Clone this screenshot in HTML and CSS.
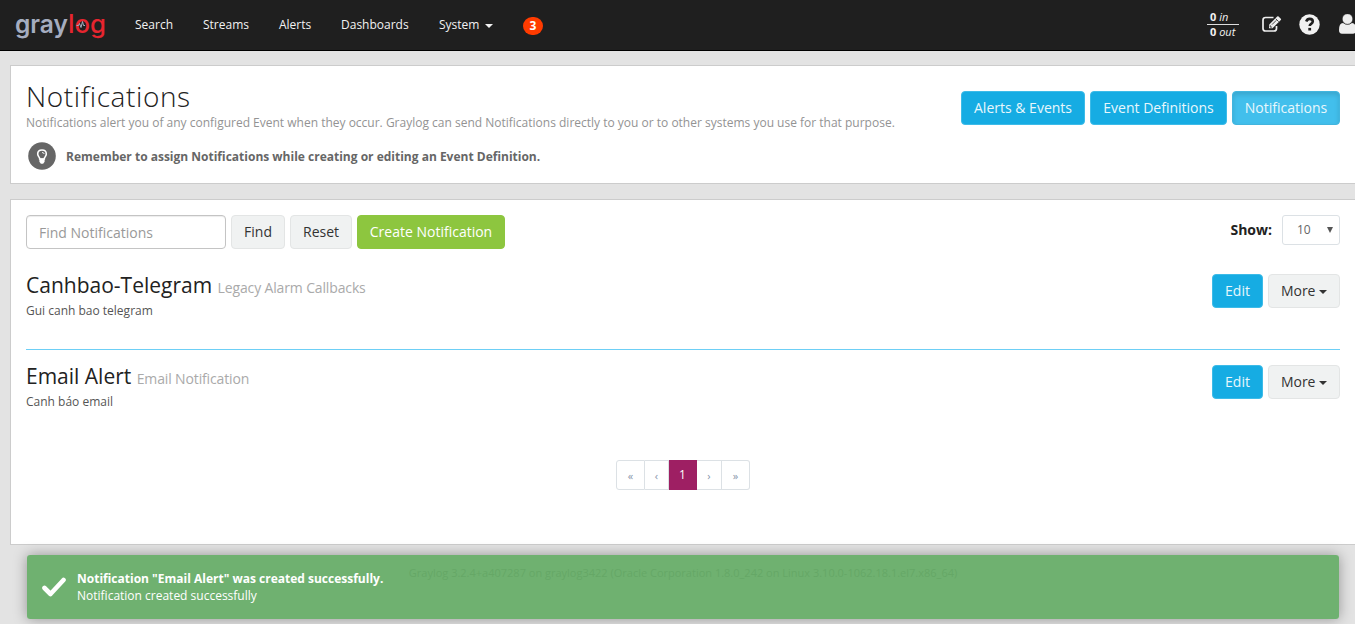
FILE: index.html
```html
<!DOCTYPE html>
<html lang="en">
<head>
<meta charset="utf-8">
<title>Graylog - Notifications</title>
<link rel="stylesheet" href="styles.css">
</head>
<body>
<nav class="navbar">
  <svg class="logo" width="92" height="32" viewBox="0 0 92 32" role="img" aria-label="graylog">
    <text class="logo-gray" x="0" y="25" textLength="53" lengthAdjust="spacingAndGlyphs">gray</text>
    <text class="logo-log" x="53" y="25" textLength="38" lengthAdjust="spacingAndGlyphs">log</text>
    <path d="M61.500 17.500h2l1-2 1.500 4 1.500-6 1 4h1.500" fill="none" stroke="#a5adc0" stroke-width="1"/>
  </svg>
  <ul class="menu">
    <li class="m-search">Search</li>
    <li class="m-streams">Streams</li>
    <li class="m-alerts">Alerts</li>
    <li class="m-dash">Dashboards</li>
    <li class="m-system">System <i class="caret"></i></li>
  </ul>
  <span class="badge">3</span>
  <div class="throughput"><div class="in"><b>0</b> <em>in</em></div><div><b>0</b> <em>out</em></div></div>
  <svg class="ic-edit" width="20" height="17" viewBox="0 0 20 17"><path d="M11.500 1.500H3.500Q1 1.500 1 4v8.500Q1 15 3.500 15h8.500q2.500 0 2.500-2.500V10" fill="none" stroke="#eee" stroke-width="1.700"/><path d="M7 12.200V8.800L15.200.6q.7-.6 1.400 0l2.200 2.100q.6.7 0 1.400l-8.300 8.100z" fill="#eee"/><path d="M8.200 9.200v1.900h1.900M13.700 2.700l3 3M10 8.600l4.300-4.300" fill="none" stroke="#1f1f1f" stroke-width=".8"/></svg>
  <svg class="ic-help" width="21" height="21" viewBox="0 0 21 21"><circle cx="10.500" cy="10.500" r="10.200" fill="#f1f1f1"/><path d="M7.200 7.500q1.100-2.700 3.500-2.600 3.100.1 3.100 2.700 0 1.300-1.600 2.300-1.500.9-1.500 2.200" fill="none" stroke="#1f1f1f" stroke-width="2.600"/><path d="M9.300 13.900h2.800v2.600H9.300z" fill="#1f1f1f"/></svg>
  <svg class="ic-user" width="16" height="20" viewBox="0 0 16 20"><path d="M0 16q0-6.800 4-7 4.500 3 9 0 4 .2 4 7 0 3.800-3 3.800H3Q0 19.800 0 16z" fill="#eee"/><circle cx="8.500" cy="5" r="5.300" fill="#eee" stroke="#1f1f1f" stroke-width=".6"/></svg>
</nav>

<main>
  <section class="panel head">
    <div>
      <h1>Notifications</h1>
      <p class="desc">Notifications alert you of any configured Event when they occur. Graylog can send Notifications directly to you or to other systems you use for that purpose.</p>
      <div class="hint">
        <svg width="28" height="28" viewBox="0 0 28 28"><circle cx="14" cy="14" r="13.800" fill="#666"/><path d="M14 8q4.300 0 4.300 4.100 0 1.300-1.100 2.700-.9 1-.9 2.200h-4.600q0-1.200-.9-2.200-1.100-1.400-1.100-2.700Q9.700 8 14 8z" fill="none" stroke="#fff" stroke-width="1.600"/><path d="M11.400 16.500h5.200v3.300l-1.500 1.900h-2.200l-1.500-1.900z" fill="#fff"/><path d="M14 10.500q2 0 2.200 1.500" fill="none" stroke="#fff" stroke-width=".9"/></svg>
        <strong>Remember to assign Notifications while creating or editing an Event Definition.</strong>
      </div>
    </div>
    <div class="actions">
      <button class="btn info w124">Alerts &amp; Events</button>
      <button class="btn info w137">Event Definitions</button>
      <button class="btn info active w108">Notifications</button>
    </div>
  </section>

  <section class="panel list">
    <div class="toolbar">
      <input class="search" type="text" placeholder="Find Notifications">
      <button class="btn w54">Find</button>
      <button class="btn w62">Reset</button>
      <button class="btn success w148">Create Notification</button>
      <label class="show">Show:</label>
      <div class="select"><span>10</span><i></i></div>
    </div>
    <article class="item">
      <div>
        <h2>Canhbao-Telegram <small>Legacy Alarm Callbacks</small></h2>
        <p>Gui canh bao telegram</p>
      </div>
      <div class="actions"><button class="btn info w51">Edit</button><button class="btn w72">More <i class="caret"></i></button></div>
    </article>
    <article class="item second">
      <div>
        <h2>Email Alert <small>Email Notification</small></h2>
        <p>Canh báo email</p>
      </div>
      <div class="actions"><button class="btn info w51">Edit</button><button class="btn w72">More <i class="caret"></i></button></div>
    </article>
    <div class="pages"><span class="p29">«</span><span class="p25">‹</span><span class="on">1</span><span class="p25">›</span><span class="p28">»</span></div>
  </section>
</main>
<footer>Graylog 3.2.4+a407287 on graylog3422 (Oracle Corporation 1.8.0_242 on Linux 3.10.0-1062.18.1.el7.x86_64)</footer>

<div class="toast">
  <svg width="24" height="20" viewBox="0 0 24 20"><path d="M2.500 11l6 6L21.500 3" fill="none" stroke="#fff" stroke-width="4.600" stroke-linecap="round" stroke-linejoin="round"/></svg>
  <div><b>Notification "Email Alert" was created successfully.</b><span>Notification created successfully</span></div>
</div>
</body>
</html>
```

FILE: styles.css
```css
* { box-sizing: border-box; }
html, body { height: 100%; }
body { margin: 0; overflow: hidden; background: #e3e3e3; color: #222; font: 12px/18px "Open Sans", "Noto Sans", sans-serif; }
h1, h2, p, ul { margin: 0; padding: 0; }
.navbar { display: flex; height: 51px; background: #1f1f1f; border-bottom: 1px solid #000; color: #f2f2f2; padding-left: 15px; overflow: hidden; }
.logo { flex: none; margin-top: 8px; font: 600 25px Inter, sans-serif; }
.logo-gray { fill: #a5adc0; }
.logo-log { fill: #e7252f; font-weight: 500; }
.menu { display: flex; list-style: none; margin-left: 28px; padding-top: 16px; white-space: nowrap; }
.m-search { width: 68px; }
.m-streams { width: 76px; }
.m-alerts { width: 62px; }
.m-dash { width: 98px; }
.m-system { width: 84px; }
.caret { display: inline-block; border: 4px solid transparent; border-top-color: currentColor; border-bottom: 0; vertical-align: middle; }
.m-system .caret { margin-left: 2px; }
.badge { width: 20px; height: 18px; margin-top: 17px; border-radius: 9px; background: #ff3b00; color: #fff; font-weight: 700; text-align: center; line-height: 18px; }
.throughput { flex: none; width: 32px; margin: 9px 0 0 auto; font-size: 11px; line-height: 15px; }
.throughput div { height: 15px; padding-left: 3px; white-space: nowrap; }
.throughput .in { height: 16px; border-bottom: 1px solid #ddd; }
.throughput div + div { line-height: 14px; }
.ic-edit, .ic-help, .ic-user { flex: none; }
.ic-edit { margin: 16px 0 0 23px; }
.ic-help { margin: 14px 0 0 17px; }
.ic-user { margin: 14px 0 0 19px; }
main { display: flex; flex-direction: column; gap: 15px; margin: 14px -1px 0 10px; }
.panel { background: #fff; border: 1px solid #ccc; padding: 15px 15px 0 15px; }
.head { display: flex; justify-content: space-between; height: 119px; }
h1 { font-size: 28px; line-height: 31px; font-weight: 300; letter-spacing: .6px; }
.desc { padding-top: 1px; color: #939393; line-height: 20px; white-space: nowrap; }
.hint { display: flex; align-items: center; gap: 10px; margin: 9px 0 0 2px; color: #666; }
.hint strong { padding-top: 1px; }
.actions { display: flex; gap: 5px; }
.head .actions { padding-top: 10px; }
.btn { height: 34px; padding: 0; border: 1px solid #e3e5e5; border-radius: 4px; background: #f0f2f2; color: #333; font: 14px/20px "Open Sans", sans-serif; white-space: nowrap; }
.info { background: #16ace3; border-color: #3dbbe8; color: #e8f7fc; }
.active { background: #42bfec; border-color: #42b5de; box-shadow: inset 0 3px 5px rgba(0,0,0,.125); }
.success { background: #8dc63f; border-color: #8dc63f; color: #fff; }
.w124 { width: 124px; } .w137 { width: 137px; } .w108 { width: 108px; }
.w54 { width: 54px; } .w62 { width: 62px; } .w148 { width: 148px; }
.w51 { width: 51px; } .w72 { width: 72px; }
.list { height: 346px; }
.toolbar { display: flex; gap: 5px; }
.search { width: 200px; height: 34px; padding: 0 12px; border: 1px solid #c4c4c4; border-radius: 4px; font: 14px "Open Sans", sans-serif; box-shadow: inset 0 1px 1px rgba(0,0,0,.075); }
.search::placeholder { color: #999; }
.show { margin: 5px 5px 0 auto; font-size: 14px; line-height: 20px; font-weight: 700; }
.select { display: flex; align-items: center; justify-content: space-between; width: 58px; height: 30px; padding: 0 6px 0 14px; border: 1px solid #dce1e5; border-radius: 3px; color: #666; }
.select i { border: 3px solid transparent; border-top: 6px solid #555; border-bottom: 0; }
.item { display: flex; justify-content: space-between; height: 101px; padding-top: 25px; border-bottom: 1px solid #6dcff6; }
.second { height: 110px; padding-top: 15px; border: 0; }
h2 { font-size: 21px; line-height: 23px; font-weight: 400; white-space: nowrap; }
small { font-size: 14px; letter-spacing: -.14px; color: #aaa; }
.item p { line-height: 18px; margin-top: 3px; color: #555; }
.pages { display: flex; justify-content: center; height: 30px; line-height: 29px; text-align: center; color: #8795aa; font-size: 11px; }
.pages span { border: 1px solid #dce1e5; border-left-width: 0; }
.pages .p29 { width: 29px; } .pages .p28 { width: 28px; }
.pages .p25 { width: 24px; }
.pages span:nth-child(4) { width: 25px; }
.pages span:first-child { border-left-width: 1px; border-radius: 3px 0 0 3px; }
.pages span:last-child { border-radius: 0 3px 3px 0; }
.pages .on { width: 28px; background: #9e1f63; border-color: #9e1f63; color: #fff; font-size: 12px; line-height: 28px; }
footer { margin-top: 19px; padding-left: 11px; text-align: center; font-size: 11px; line-height: 17px; color: #444; white-space: nowrap; }
.toast { position: absolute; left: 27px; top: 555px; width: 1312px; height: 64px; display: flex; align-items: center; padding-left: 15px; gap: 11px; border-radius: 3px; background: rgba(103,173,104,.94); box-shadow: 0 0 14px rgba(0,0,0,.35); color: #fff; }
.toast b, .toast span { display: block; line-height: 17px; }
```
